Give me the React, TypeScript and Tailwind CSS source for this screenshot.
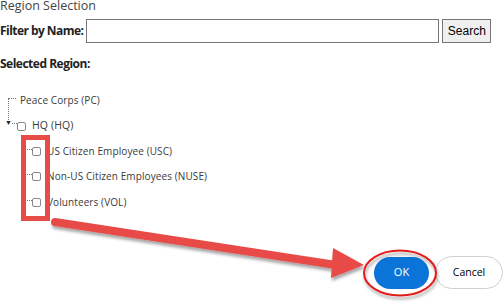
import React from 'react';

type Node = { label: string };

const children: Node[] = [
  { label: 'US Citizen Employee (USC)' },
  { label: 'Non-US Citizen Employees (NUSE)' },
  { label: 'Volunteers (VOL)' },
];

function Box() {
  return <span className="inline-block h-[9px] w-[9px] shrink-0 rounded-[2px] border border-[#8a8a8a] bg-white" />;
}

function Annotations() {
  return (
    <svg className="pointer-events-none absolute left-0 top-0" width="504" height="303">
      <defs>
        <filter id="sh" x="-10%" y="-50%" width="120%" height="200%">
          <feDropShadow dx="1" dy="3" stdDeviation="1.6" floodColor="#000" floodOpacity="0.35" />
        </filter>
      </defs>
      <g filter="url(#sh)">
        <line x1="55" y1="222" x2="336" y2="265" stroke="#e84c47" strokeWidth="8" strokeLinecap="round" />
        <polygon points="333,248 364,265 331,278" fill="#e84c47" />
        <ellipse cx="400" cy="273" rx="36" ry="22.5" fill="none" stroke="#e31b1b" strokeWidth="2" />
      </g>
    </svg>
  );
}

export default function App() {
  return (
    <div className="relative h-[303px] w-[504px] overflow-hidden bg-white font-['Open_Sans',sans-serif] text-[#333]">
      <div className="text-[12.5px] leading-[12px] text-[#444]">Region Selection</div>

      <div className="mt-[7px] flex items-center">
        <label className="text-[12px] font-bold tracking-[-0.55px] text-[#222]">Filter by Name:</label>
        <input className="ml-[3px] h-[24px] w-[353px] border border-[#767676] bg-white outline-none" />
        <button className="ml-[3px] h-[24px] w-[49px] border border-[#767676] bg-[#efefef] font-['Liberation_Sans',sans-serif] text-[12px] text-black">
          Search
        </button>
      </div>

      <div className="mt-[12px] text-[12px] font-bold tracking-[-0.5px] text-[#222]">Selected Region:</div>

      <div className="mt-[15px] text-[10px] tracking-[0.1px] text-[#3a3a3a]">
        <div className="relative flex h-[25px] items-center">
          <span className="absolute left-[8px] top-[10px] h-[22px] w-[8px] border-l border-t border-dotted border-[#777]" />
          <span className="ml-[20px]">Peace Corps (PC)</span>
        </div>
        <div className="flex h-[26px] items-center">
          <span className="ml-[5px] mb-[7px] text-[7px] leading-none text-[#222]">▼</span>
          <span className="mb-[5px] w-[5px] border-t border-dotted border-[#777]" />
          <Box />
          <span className="ml-[6px] text-[10.5px]">HQ (HQ)</span>
        </div>
        {children.map((c, i) => (
          <div key={c.label} className={`flex items-center ${i === 2 ? 'h-[27px]' : 'h-[25px]'}`}>
            <span className="mb-[5px] ml-[27px] w-[5px] border-t border-dotted border-[#777]" />
            <Box />
            <span className="ml-[6px]">{c.label}</span>
          </div>
        ))}
      </div>

      <div className="absolute left-[21px] top-[135px] h-[86px] w-[29px] border-[5px] border-[#e84c47]" />

      <div className="absolute bottom-[14px] right-[1px] flex items-center gap-[6px]">
        <button className="h-[32px] w-[55px] rounded-full bg-[#0b74d8] text-[11px] text-white">OK</button>
        <button className="h-[33px] w-[68px] rounded-full border border-[#cfcfcf] bg-white text-[10.5px] text-black">
          Cancel
        </button>
      </div>

      <Annotations />
    </div>
  );
}
